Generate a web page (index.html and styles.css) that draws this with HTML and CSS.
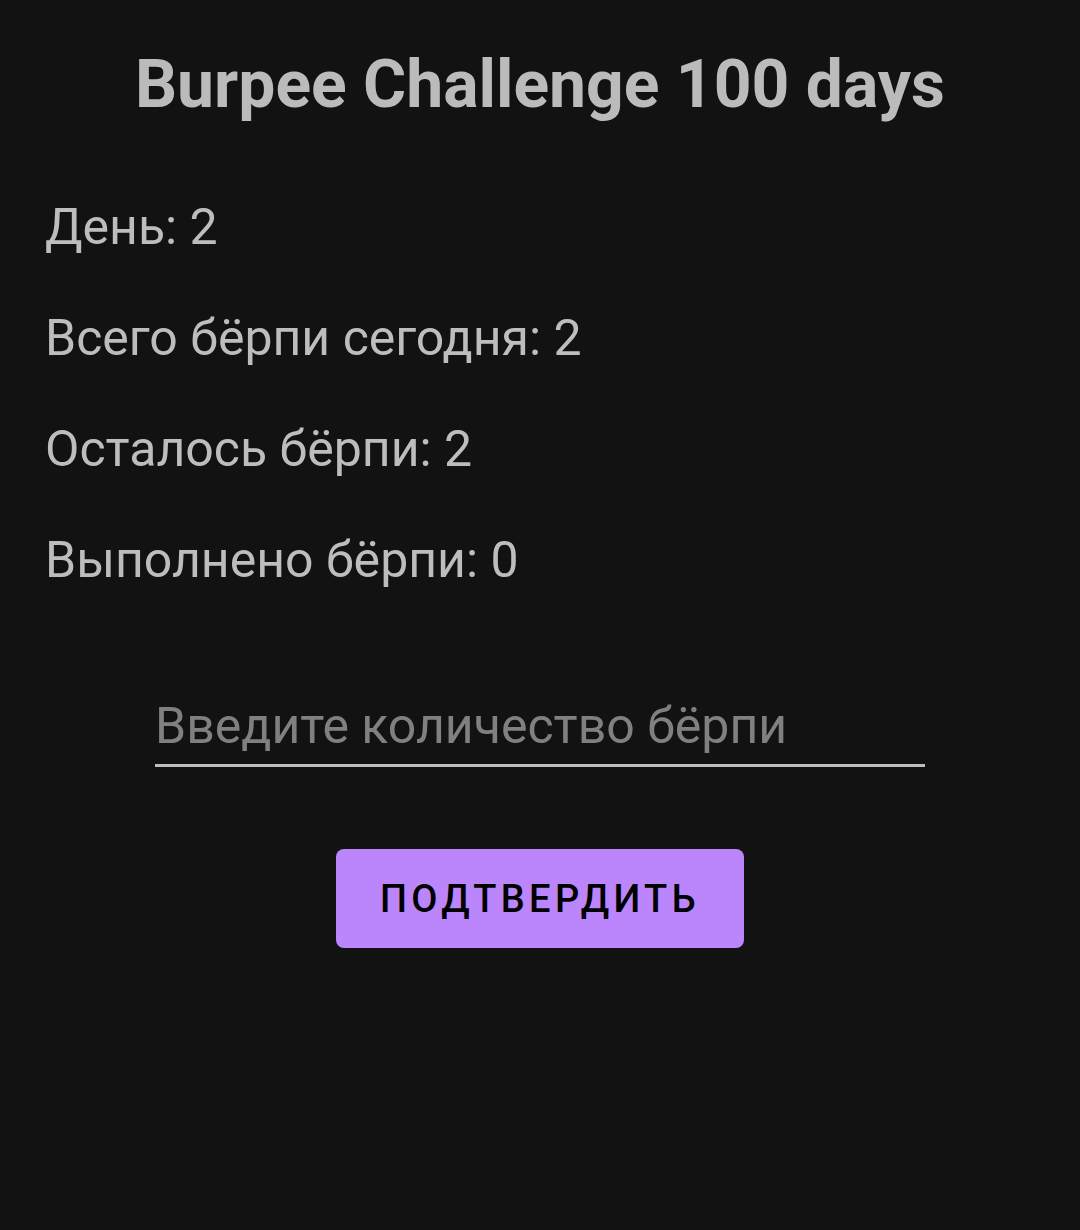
FILE: index.html
```html
<!DOCTYPE html>
<html lang="ru">
<head>
<meta charset="utf-8">
<link rel="stylesheet" href="styles.css">
</head>
<body>
<main class="app">
  <h1 class="title">Burpee Challenge 100 days</h1>
  <div class="stats">
    <p class="stat">День: 2</p>
    <p class="stat">Всего бёрпи сегодня: 2</p>
    <p class="stat">Осталось бёрпи: 2</p>
    <p class="stat">Выполнено бёрпи: 0</p>
  </div>
  <div class="form">
    <input class="field" type="text" placeholder="Введите количество бёрпи">
    <button class="btn" type="button">Подтвердить</button>
  </div>
</main>
</body>
</html>
```

FILE: styles.css
```css
html, body {
  margin: 0;
  padding: 0;
  background: #121212;
  height: 100%;
}
body {
  font-family: Roboto, "Noto Sans", sans-serif;
  color: #bdbdbd;
}
.app {
  display: flex;
  flex-direction: column;
  padding: 0 45px;
}
.title {
  margin: 47px 0 0;
  text-align: center;
  font-size: 66px;
  font-weight: 700;
  line-height: 75px;
  color: #bbbbbb;
}
.stats {
  display: flex;
  flex-direction: column;
  gap: 53px;
  margin-top: 76px;
}
.stat {
  margin: 0;
  font-size: 50px;
  line-height: 58px;
  color: #bdbdbd;
}
.form {
  display: flex;
  flex-direction: column;
  align-items: center;
  margin-top: 108px;
}
.field {
  width: 770px;
  box-sizing: border-box;
  background: transparent;
  border: none;
  border-bottom: 3px solid #bdbdbd;
  padding: 0 0 9px;
  font-family: Roboto, "Noto Sans", sans-serif;
  font-size: 50px;
  line-height: 58px;
  color: #bdbdbd;
  outline: none;
}
.field::placeholder {
  color: #808080;
}
.btn {
  margin-top: 82px;
  width: 408px;
  height: 99px;
  border: none;
  border-radius: 8px;
  background: #bb86fc;
  color: #000000;
  font-family: Roboto, "Noto Sans", sans-serif;
  font-size: 38px;
  font-weight: 500;
  letter-spacing: 4.3px;
  text-transform: uppercase;
}
```
